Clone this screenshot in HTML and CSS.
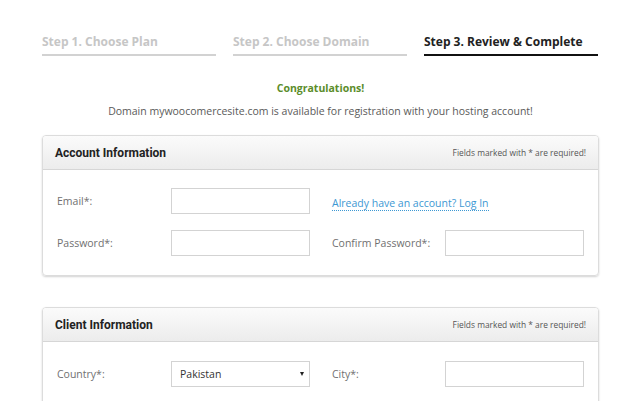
FILE: index.html
```html
<!DOCTYPE html>
<html>
<head>
<meta charset="utf-8">
<link rel="stylesheet" href="styles.css">
</head>
<body>
<div class="page">
  <div class="steps">
    <div class="step">Step 1. Choose Plan</div>
    <div class="step">Step 2. Choose Domain</div>
    <div class="step active">Step 3. Review &amp; Complete</div>
  </div>
  <div class="congrats">Congratulations!</div>
  <div class="notice">Domain mywoocomercesite.com is available for registration with your hosting account!</div>

  <div class="panel">
    <div class="panel-head">
      <span class="panel-title">Account Information</span>
      <span class="panel-note">Fields marked with * are required!</span>
    </div>
    <div class="panel-body">
      <label class="lbl">Email*:</label>
      <input class="field" type="text">
      <div class="login-cell"><a class="login" href="#">Already have an account? Log In</a></div>
      <label class="lbl">Password*:</label>
      <input class="field" type="password">
      <label class="lbl lbl2">Confirm Password*:</label>
      <input class="field" type="password">
    </div>
  </div>

  <div class="panel panel-second">
    <div class="panel-head">
      <span class="panel-title">Client Information</span>
      <span class="panel-note">Fields marked with * are required!</span>
    </div>
    <div class="panel-body">
      <label class="lbl">Country*:</label>
      <div class="field select"><span>Pakistan</span><span class="caret"></span></div>
      <label class="lbl lbl2">City*:</label>
      <input class="field" type="text">
      <span></span>
      <input class="field" type="text">
      <span></span>
      <input class="field" type="text">
    </div>
  </div>
</div>
</body>
</html>
```

FILE: styles.css
```css
html, body {
  margin: 0;
  padding: 0;
  background: #fff;
}
body {
  font-family: "Open Sans", "Liberation Sans", sans-serif;
  color: #555;
  overflow: hidden;
}
.page {
  width: 557px;
  margin-left: 42px;
  padding-top: 33px;
}
.steps {
  display: flex;
  gap: 17px;
}
.step {
  width: 174px;
  font-size: 12px;
  font-weight: 700;
  line-height: 18px;
  color: #c6c6c6;
  padding-bottom: 3px;
  border-bottom: 2px solid #d2d2d2;
}
.step.active {
  color: #222;
  border-bottom-color: #111;
}
.congrats {
  margin-top: 25px;
  text-align: center;
  font-size: 10.5px;
  font-weight: 700;
  line-height: 14px;
  color: #5b8d2a;
}
.notice {
  margin-top: 9px;
  text-align: center;
  font-size: 10.5px;
  line-height: 14px;
  color: #5a5a5a;
}
.panel {
  margin-top: 17px;
  border: 1px solid #dcdcdc;
  border-radius: 4px;
  box-shadow: 0 1px 2px rgba(0,0,0,0.18);
  overflow: hidden;
}
.panel-second {
  margin-top: 31px;
}
.panel-head {
  height: 33px;
  display: flex;
  align-items: center;
  justify-content: space-between;
  padding: 0 12px 0 12px;
  background: linear-gradient(#fbfbfb, #ececec);
  border-bottom: 1px solid #d6d6d6;
}
.panel-title {
  font-family: Roboto, "Liberation Sans", sans-serif;
  font-weight: 700;
  font-size: 12px;
  color: #222;
}
.panel-note {
  font-size: 8.4px;
  color: #555;
}
.panel-body {
  display: grid;
  grid-template-columns: 114px 139px 135px 139px;
  row-gap: 16px;
  align-items: center;
  padding: 18px 15px 19px 14px;
}
.panel-second .panel-body {
  padding-top: 19px;
}
.lbl {
  font-size: 10.5px;
  color: #707070;
}
.lbl2 {
  padding-left: 22px;
}
.field {
  box-sizing: border-box;
  height: 26px;
  width: 139px;
  margin: 0;
  border: 1px solid #d3d3d3;
  background: #fff;
  font-family: inherit;
}
.login-cell {
  grid-column: span 2;
  padding-left: 22px;
}
.login {
  font-size: 10.5px;
  color: #3d98d3;
  text-decoration: none;
  border-bottom: 1px dotted #3d98d3;
  line-height: 14px;
}
.select {
  display: flex;
  align-items: center;
  justify-content: space-between;
  padding: 0 5px 0 8px;
  font-size: 10.5px;
  color: #333;
}
.caret {
  width: 0;
  height: 0;
  border-left: 2.5px solid transparent;
  border-right: 2.5px solid transparent;
  border-top: 4px solid #222;
}
```
